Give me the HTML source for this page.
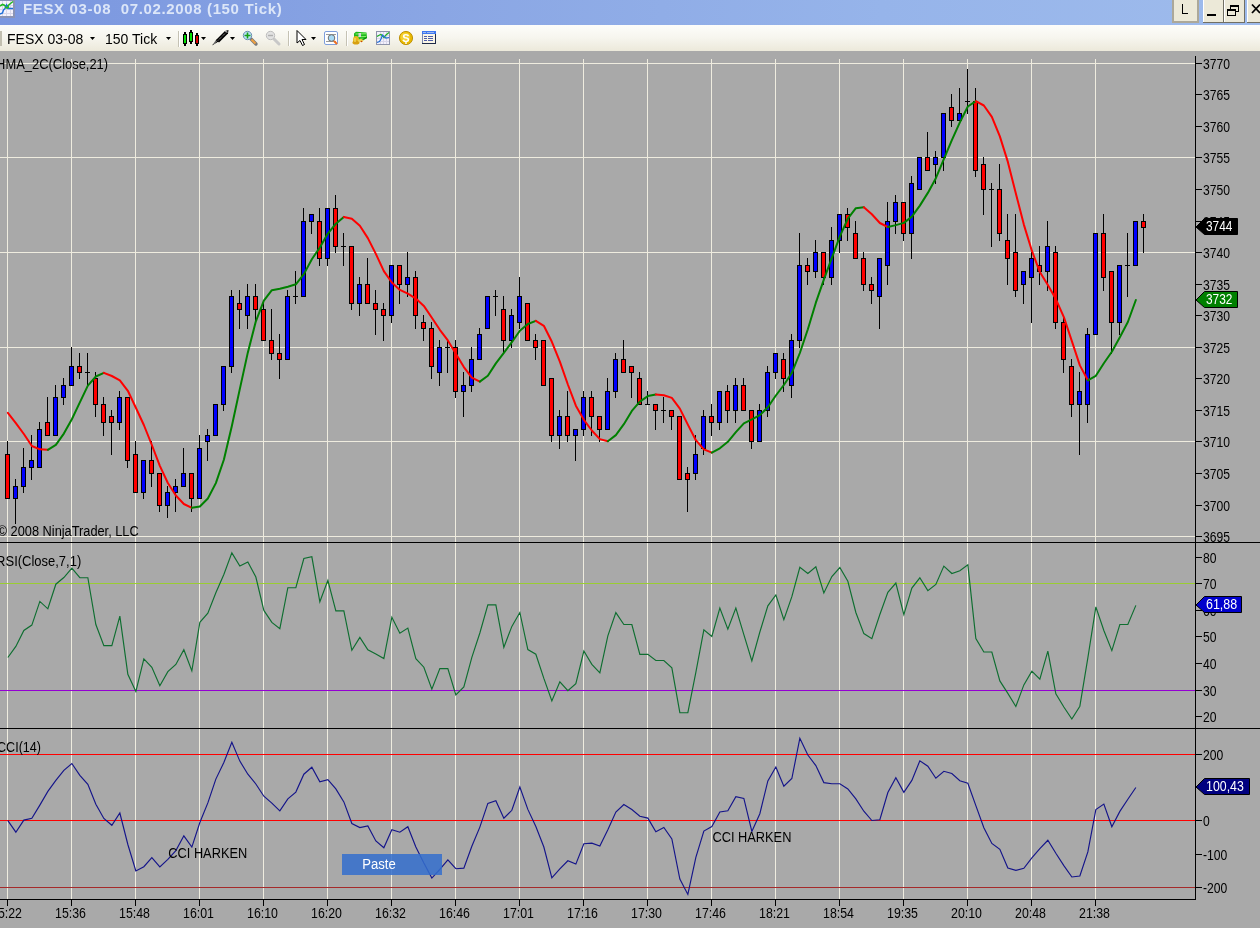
<!DOCTYPE html>
<html><head><meta charset="utf-8">
<style>
html,body{margin:0;padding:0;}
body{width:1260px;height:928px;overflow:hidden;position:relative;background:#A9A9A9;font-family:"Liberation Sans",sans-serif;}
#title{will-change:transform;position:absolute;left:0;top:0;width:1260px;height:25px;background:linear-gradient(to right,#7A96DF 0%,#8AA6E4 35%,#96B4EA 70%,#9EBBEC 100%);}
#title .t{position:absolute;left:23px;top:0px;font-size:15px;font-weight:bold;color:#DCE6F8;white-space:nowrap;letter-spacing:0.64px;}
#tb{will-change:transform;position:absolute;left:0;top:25px;width:1260px;height:26px;background:linear-gradient(to bottom,#FDFDFA 0%,#F6F5EE 50%,#ECE9DA 100%);}
.tt{position:absolute;font-size:14px;color:#000;white-space:nowrap;top:6px;}
.lbl{font-family:"Liberation Sans",sans-serif;font-size:14px;fill:#000;}
</style></head><body>
<div id="title"><div class="t">FESX 03-08&nbsp; 07.02.2008 (150 Tick)</div></div>
<div id="tb">
<div class="tt" style="left:7px">FESX 03-08</div>
<div class="tt" style="left:105px">150 Tick</div>
</div>

<svg width="1260" height="51" style="position:absolute;left:0;top:0;will-change:transform">
<!-- title icon -->
<g shape-rendering="crispEdges">
<rect x="0" y="0" width="15" height="18" fill="#8A93B5"/>
<rect x="0" y="1" width="13" height="15" fill="#F4F2FC"/>
<rect x="2" y="1" width="1" height="15" fill="#D8D6E8"/>
<rect x="6" y="1" width="1" height="15" fill="#D8D6E8"/>
<rect x="10" y="1" width="1" height="15" fill="#D8D6E8"/>
<rect x="0" y="5" width="13" height="1" fill="#D8D6E8"/>
<rect x="0" y="9" width="13" height="1" fill="#D8D6E8"/>
<rect x="0" y="13" width="13" height="1" fill="#D8D6E8"/>
</g>
<polyline points="0,6 2.5,4.5 4,5 6,6.5 8,5.5 10.5,3.5 13,1.5" fill="none" stroke="#22B822" stroke-width="1.6"/>
<polyline points="0,14 2.5,13 3.5,10 5,8.5 6.5,5 8,8.5 10,8.5 13,8.5" fill="none" stroke="#1E6FD8" stroke-width="1.4"/>
<polyline points="5,7 7,8 9,6.5" fill="none" stroke="#22B822" stroke-width="1.6"/>
<!-- window buttons -->
<g shape-rendering="crispEdges">
<rect x="1172" y="0" width="27" height="23" fill="#ACA899"/>
<rect x="1174" y="0" width="23" height="21" fill="#ECE9D8"/>
<rect x="1182" y="4" width="1" height="10" fill="#000"/>
<rect x="1182" y="13" width="6" height="1" fill="#000"/>

<rect x="1203" y="0" width="21" height="23" fill="#716F64"/>
<rect x="1203" y="0" width="1" height="22" fill="#FFF"/>
<rect x="1204" y="0" width="19" height="22" fill="#ECE9D8"/>
<rect x="1207" y="14" width="9" height="2" fill="#000"/>

<rect x="1224" y="0" width="21" height="23" fill="#716F64"/>
<rect x="1224" y="0" width="1" height="22" fill="#FFF"/>
<rect x="1225" y="0" width="19" height="22" fill="#ECE9D8"/>
<rect x="1230" y="5" width="9" height="7" fill="#000"/>
<rect x="1231" y="7" width="7" height="4" fill="#ECE9D8"/>
<rect x="1227" y="9" width="9" height="7" fill="#000"/>
<rect x="1228" y="11" width="7" height="4" fill="#ECE9D8"/>

<rect x="1247" y="0" width="13" height="23" fill="#716F64"/>
<rect x="1247" y="0" width="1" height="22" fill="#FFF"/>
<rect x="1248" y="0" width="12" height="22" fill="#ECE9D8"/>
</g>
<path d="M1252,4.5 L1260,13 M1260,4.5 L1252,13" stroke="#000" stroke-width="1.8"/>
<!-- toolbar -->
<g shape-rendering="crispEdges">
<rect x="0" y="31" width="2" height="15" fill="#C2BFB0"/>
<rect x="178" y="31" width="1" height="16" fill="#C5C2B4"/>
<rect x="179" y="31" width="1" height="16" fill="#FFFFFF"/>
<rect x="288" y="31" width="1" height="15" fill="#C5C2B4"/>
<rect x="289" y="31" width="1" height="15" fill="#FFFFFF"/>
<rect x="346" y="31" width="1" height="15" fill="#C5C2B4"/>
<rect x="347" y="31" width="1" height="15" fill="#FFFFFF"/>
</g>
<g fill="#000">
<polygon points="90,37 95,37 92.5,40"/>
<polygon points="166,37 171,37 168.5,40"/>
<polygon points="201,37 206,37 203.5,40"/>
<polygon points="230,37 235,37 232.5,40"/>
<polygon points="311,37 316,37 313.5,40"/>
</g>
<!-- candle icon -->
<g shape-rendering="crispEdges">
<rect x="184" y="32" width="2" height="14" fill="#000"/>
<rect x="183" y="34" width="4" height="10" fill="#000"/>
<rect x="184" y="35" width="2" height="8" fill="#00E000"/>
<rect x="190" y="30" width="2" height="14" fill="#000"/>
<rect x="189" y="32" width="4" height="10" fill="#000"/>
<rect x="190" y="33" width="2" height="8" fill="#00E000"/>
<rect x="196" y="33" width="2" height="13" fill="#000"/>
<rect x="195" y="35" width="4" height="9" fill="#000"/>
<rect x="196" y="36" width="2" height="7" fill="#E00000"/>
</g>
<!-- pen -->
<polygon points="212,45.5 216.5,39.5 218.5,41.5" fill="#000"/>
<path d="M213.5,44 L217,40.5" stroke="#E8E8E8" stroke-width="0.8"/>
<polygon points="216,40 225,31 228.5,30 228,33.5 219,42.5" fill="#000"/>
<path d="M218,40.5 L226,32.5" stroke="#C8C8C8" stroke-width="0.8" stroke-dasharray="1.2,0.8"/>
<path d="M225,31.5 L227,31.5 L227,33" stroke="#A8A8A8" stroke-width="0.9" fill="none"/>
<!-- zoom + -->
<path d="M251,39 L256,44" stroke="#7A7A7A" stroke-width="3.4" stroke-linecap="round"/>
<path d="M251.5,39.5 L255.5,43.5" stroke="#F0A040" stroke-width="2"/>
<circle cx="247.5" cy="35.5" r="4.2" fill="#BEE3F8" stroke="#6D8FB0" stroke-width="1"/>
<path d="M247.5,32.5 V38.5 M244.5,35.5 H250.5" stroke="#18A018" stroke-width="1.6"/>
<!-- zoom - -->
<path d="M274,39 L279,44" stroke="#C8C8C8" stroke-width="3" stroke-linecap="round"/>
<circle cx="270.5" cy="35.5" r="4.2" fill="#E2E2E2" stroke="#BDBDBD" stroke-width="1"/>
<path d="M268,35.5 H273" stroke="#B0B0B0" stroke-width="1.4"/>
<!-- cursor -->
<path d="M297,30.5 L297,43 L300,40.5 L302.5,45.5 L304.5,44.5 L302,39.5 L306,39.5 Z" fill="#FFF" stroke="#000" stroke-width="1"/>
<!-- page magnifier -->
<rect x="324.5" y="31.5" width="13" height="13" rx="1.5" fill="#FFF" stroke="#7E9EDC" stroke-width="1"/>
<path d="M326,34.5 H336 M326,41.5 H336" stroke="#9A9A9A" stroke-width="1"/>
<circle cx="331.5" cy="38" r="3.3" fill="#A8DAF5" stroke="#707070" stroke-width="1"/>
<path d="M334,41 L337,44" stroke="#F07020" stroke-width="2"/>
<!-- money -->
<path d="M354,33.5 L356,31.8 L366.5,32.5 L367,38 L363,40.5 L358,40 L354,37 Z" fill="#1DB81D"/>
<path d="M355.5,34 L366,33.8 M358,36.8 L366,36.5 M360,39.2 L365,38.8" stroke="#8AF06A" stroke-width="1.1"/>
<path d="M362,39.8 L366.8,37.5" stroke="#078A0A" stroke-width="1.2"/>
<rect x="358.5" y="33" width="2.5" height="4" fill="#E8D0F0" opacity="0.9"/>
<ellipse cx="356" cy="40" rx="3" ry="4" fill="#E6B820"/>
<ellipse cx="356" cy="42.5" rx="3.5" ry="2" fill="#D8A010"/>
<ellipse cx="360.5" cy="40.5" rx="2.8" ry="1.6" fill="#EDD050"/>
<circle cx="361.5" cy="41.5" r="0.8" fill="#C04010"/>
<path d="M355,38 V42" stroke="#F8E878" stroke-width="1"/>
<!-- chart icon -->
<g shape-rendering="crispEdges">
<rect x="376" y="31" width="14" height="14" fill="#8E93AA"/>
<rect x="377" y="32" width="12" height="12" fill="#F2F0FC"/>
<rect x="380" y="32" width="1" height="12" fill="#D8D6EA"/>
<rect x="383" y="32" width="1" height="12" fill="#D8D6EA"/>
<rect x="386" y="32" width="1" height="12" fill="#D8D6EA"/>
<rect x="377" y="35" width="12" height="1" fill="#D8D6EA"/>
<rect x="377" y="38" width="12" height="1" fill="#D8D6EA"/>
<rect x="377" y="41" width="12" height="1" fill="#D8D6EA"/>
</g>
<polyline points="377,36.5 379.5,35 381,34.5 382.5,36 384,37.5 386,35 389,32.5" fill="none" stroke="#20B020" stroke-width="1.2"/>
<polyline points="377,42.5 379.5,41.5 381,39 382.5,35 384,36.5 386,38 389,37.5" fill="none" stroke="#2070D8" stroke-width="1.2"/>
<!-- dollar coin -->
<circle cx="406" cy="38" r="6.6" fill="#E8B800" stroke="#B88A00" stroke-width="0.9"/>
<circle cx="405.3" cy="37.2" r="4.8" fill="#F4D030"/>
<text x="406" y="42" text-anchor="middle" style="font-family:'Liberation Sans',sans-serif;font-weight:bold;font-size:11px" fill="#FFF">S</text>
<path d="M406,42 V44" stroke="#FFF" stroke-width="1.4"/>
<!-- table icon -->
<g shape-rendering="crispEdges">
<rect x="422" y="31" width="14" height="13" fill="#1E2A48"/>
<rect x="422" y="31" width="14" height="3" fill="#3F78F0"/>
<rect x="422" y="34" width="1" height="9" fill="#7C88B0"/>
<rect x="423" y="34" width="12" height="9" fill="#FBF6E6"/>
<rect x="424" y="36" width="3" height="1" fill="#4E5EA8"/>
<rect x="428" y="36" width="5" height="1" fill="#4E5EA8"/>
<rect x="424" y="38" width="3" height="1" fill="#4E5EA8"/>
<rect x="428" y="38" width="5" height="1" fill="#4E5EA8"/>
<rect x="424" y="40" width="3" height="1" fill="#4E5EA8"/>
<rect x="428" y="40" width="5" height="1" fill="#4E5EA8"/>
<rect x="423" y="32" width="3" height="1" fill="#9CB8F0"/>
<rect x="427" y="32" width="7" height="1" fill="#9CB8F0"/>
</g>
</svg>

<svg width="1260" height="928" style="position:absolute;left:0;top:0;will-change:transform">
<g shape-rendering="crispEdges" fill="#EFECDF">
<rect x="7" y="59" width="1" height="840"/>
<rect x="71" y="59" width="1" height="840"/>
<rect x="135" y="59" width="1" height="840"/>
<rect x="199" y="59" width="1" height="840"/>
<rect x="263" y="59" width="1" height="840"/>
<rect x="327" y="59" width="1" height="840"/>
<rect x="391" y="59" width="1" height="840"/>
<rect x="455" y="59" width="1" height="840"/>
<rect x="519" y="59" width="1" height="840"/>
<rect x="583" y="59" width="1" height="840"/>
<rect x="647" y="59" width="1" height="840"/>
<rect x="711" y="59" width="1" height="840"/>
<rect x="775" y="59" width="1" height="840"/>
<rect x="839" y="59" width="1" height="840"/>
<rect x="903" y="59" width="1" height="840"/>
<rect x="967" y="59" width="1" height="840"/>
<rect x="1031" y="59" width="1" height="840"/>
<rect x="1095" y="59" width="1" height="840"/>
<rect x="0" y="63" width="1195" height="1"/>
<rect x="0" y="157" width="1195" height="1"/>
<rect x="0" y="252" width="1195" height="1"/>
<rect x="0" y="347" width="1195" height="1"/>
<rect x="0" y="441" width="1195" height="1"/>
<rect x="0" y="536" width="1195" height="1"/>
</g>
<g shape-rendering="crispEdges" fill="#000">
<rect x="1195" y="56" width="1" height="844"/>
<rect x="0" y="542" width="1260" height="1"/>
<rect x="0" y="728" width="1260" height="1"/>
<rect x="0" y="899" width="1196" height="1"/>
<rect x="1196" y="536" width="6" height="1"/>
<rect x="1196" y="505" width="6" height="1"/>
<rect x="1196" y="473" width="6" height="1"/>
<rect x="1196" y="441" width="6" height="1"/>
<rect x="1196" y="410" width="6" height="1"/>
<rect x="1196" y="378" width="6" height="1"/>
<rect x="1196" y="347" width="6" height="1"/>
<rect x="1196" y="315" width="6" height="1"/>
<rect x="1196" y="284" width="6" height="1"/>
<rect x="1196" y="252" width="6" height="1"/>
<rect x="1196" y="221" width="6" height="1"/>
<rect x="1196" y="189" width="6" height="1"/>
<rect x="1196" y="157" width="6" height="1"/>
<rect x="1196" y="126" width="6" height="1"/>
<rect x="1196" y="94" width="6" height="1"/>
<rect x="1196" y="63" width="6" height="1"/>
<rect x="1196" y="716" width="6" height="1"/>
<rect x="1196" y="690" width="6" height="1"/>
<rect x="1196" y="663" width="6" height="1"/>
<rect x="1196" y="636" width="6" height="1"/>
<rect x="1196" y="610" width="6" height="1"/>
<rect x="1196" y="583" width="6" height="1"/>
<rect x="1196" y="557" width="6" height="1"/>
<rect x="1196" y="754" width="6" height="1"/>
<rect x="1196" y="787" width="6" height="1"/>
<rect x="1196" y="820" width="6" height="1"/>
<rect x="1196" y="854" width="6" height="1"/>
<rect x="1196" y="887" width="6" height="1"/>
<rect x="7" y="900" width="1" height="6"/>
<rect x="71" y="900" width="1" height="6"/>
<rect x="135" y="900" width="1" height="6"/>
<rect x="199" y="900" width="1" height="6"/>
<rect x="263" y="900" width="1" height="6"/>
<rect x="327" y="900" width="1" height="6"/>
<rect x="391" y="900" width="1" height="6"/>
<rect x="455" y="900" width="1" height="6"/>
<rect x="519" y="900" width="1" height="6"/>
<rect x="583" y="900" width="1" height="6"/>
<rect x="647" y="900" width="1" height="6"/>
<rect x="711" y="900" width="1" height="6"/>
<rect x="775" y="900" width="1" height="6"/>
<rect x="839" y="900" width="1" height="6"/>
<rect x="903" y="900" width="1" height="6"/>
<rect x="967" y="900" width="1" height="6"/>
<rect x="1031" y="900" width="1" height="6"/>
<rect x="1095" y="900" width="1" height="6"/>
</g>
<g shape-rendering="crispEdges">
<rect x="0" y="583" width="1195" height="1" fill="#9ACD32"/>
<rect x="0" y="690" width="1195" height="1" fill="#9400D3"/>
<rect x="0" y="754" width="1195" height="1" fill="#FF0000"/>
<rect x="0" y="820" width="1195" height="1" fill="#FF0000"/>
<rect x="0" y="887" width="1195" height="1" fill="#A52A2A"/>
</g>
<g shape-rendering="crispEdges">
<rect x="7" y="441" width="1" height="58" fill="#000"/>
<rect x="5" y="454" width="5" height="45" fill="#000"/>
<rect x="6" y="455" width="3" height="43" fill="#FF0000"/>
<rect x="15" y="479" width="1" height="45" fill="#000"/>
<rect x="13" y="486" width="5" height="13" fill="#000"/>
<rect x="14" y="487" width="3" height="11" fill="#0000FF"/>
<rect x="23" y="448" width="1" height="45" fill="#000"/>
<rect x="21" y="467" width="5" height="20" fill="#000"/>
<rect x="22" y="468" width="3" height="18" fill="#0000FF"/>
<rect x="31" y="435" width="1" height="45" fill="#000"/>
<rect x="29" y="460" width="5" height="8" fill="#000"/>
<rect x="30" y="461" width="3" height="6" fill="#0000FF"/>
<rect x="39" y="422" width="1" height="46" fill="#000"/>
<rect x="37" y="429" width="5" height="39" fill="#000"/>
<rect x="38" y="430" width="3" height="37" fill="#0000FF"/>
<rect x="47" y="397" width="1" height="39" fill="#000"/>
<rect x="45" y="422" width="5" height="14" fill="#000"/>
<rect x="46" y="423" width="3" height="12" fill="#FF0000"/>
<rect x="55" y="385" width="1" height="51" fill="#000"/>
<rect x="53" y="397" width="5" height="39" fill="#000"/>
<rect x="54" y="398" width="3" height="37" fill="#0000FF"/>
<rect x="63" y="378" width="1" height="27" fill="#000"/>
<rect x="61" y="385" width="5" height="13" fill="#000"/>
<rect x="62" y="386" width="3" height="11" fill="#0000FF"/>
<rect x="71" y="347" width="1" height="39" fill="#000"/>
<rect x="69" y="366" width="5" height="20" fill="#000"/>
<rect x="70" y="367" width="3" height="18" fill="#0000FF"/>
<rect x="79" y="353" width="1" height="26" fill="#000"/>
<rect x="77" y="366" width="5" height="7" fill="#000"/>
<rect x="78" y="367" width="3" height="5" fill="#FF0000"/>
<rect x="87" y="353" width="1" height="33" fill="#000"/>
<rect x="85" y="372" width="5" height="1" fill="#000"/>
<rect x="95" y="372" width="1" height="45" fill="#000"/>
<rect x="93" y="378" width="5" height="27" fill="#000"/>
<rect x="94" y="379" width="3" height="25" fill="#FF0000"/>
<rect x="103" y="397" width="1" height="39" fill="#000"/>
<rect x="101" y="404" width="5" height="19" fill="#000"/>
<rect x="102" y="405" width="3" height="17" fill="#FF0000"/>
<rect x="111" y="410" width="1" height="45" fill="#000"/>
<rect x="109" y="416" width="5" height="7" fill="#000"/>
<rect x="110" y="417" width="3" height="5" fill="#FF0000"/>
<rect x="119" y="391" width="1" height="39" fill="#000"/>
<rect x="117" y="397" width="5" height="26" fill="#000"/>
<rect x="118" y="398" width="3" height="24" fill="#0000FF"/>
<rect x="127" y="397" width="1" height="71" fill="#000"/>
<rect x="125" y="397" width="5" height="64" fill="#000"/>
<rect x="126" y="398" width="3" height="62" fill="#FF0000"/>
<rect x="135" y="441" width="1" height="52" fill="#000"/>
<rect x="133" y="454" width="5" height="39" fill="#000"/>
<rect x="134" y="455" width="3" height="37" fill="#FF0000"/>
<rect x="143" y="460" width="1" height="39" fill="#000"/>
<rect x="141" y="460" width="5" height="33" fill="#000"/>
<rect x="142" y="461" width="3" height="31" fill="#0000FF"/>
<rect x="151" y="441" width="1" height="46" fill="#000"/>
<rect x="149" y="460" width="5" height="14" fill="#000"/>
<rect x="150" y="461" width="3" height="12" fill="#FF0000"/>
<rect x="159" y="473" width="1" height="39" fill="#000"/>
<rect x="157" y="473" width="5" height="33" fill="#000"/>
<rect x="158" y="474" width="3" height="31" fill="#FF0000"/>
<rect x="167" y="486" width="1" height="32" fill="#000"/>
<rect x="165" y="492" width="5" height="14" fill="#000"/>
<rect x="166" y="493" width="3" height="12" fill="#0000FF"/>
<rect x="175" y="479" width="1" height="33" fill="#000"/>
<rect x="173" y="486" width="5" height="7" fill="#000"/>
<rect x="174" y="487" width="3" height="5" fill="#0000FF"/>
<rect x="183" y="448" width="1" height="39" fill="#000"/>
<rect x="181" y="473" width="5" height="14" fill="#000"/>
<rect x="182" y="474" width="3" height="12" fill="#0000FF"/>
<rect x="191" y="473" width="1" height="39" fill="#000"/>
<rect x="189" y="473" width="5" height="26" fill="#000"/>
<rect x="190" y="474" width="3" height="24" fill="#FF0000"/>
<rect x="199" y="435" width="1" height="64" fill="#000"/>
<rect x="197" y="448" width="5" height="51" fill="#000"/>
<rect x="198" y="449" width="3" height="49" fill="#0000FF"/>
<rect x="207" y="429" width="1" height="32" fill="#000"/>
<rect x="205" y="435" width="5" height="7" fill="#000"/>
<rect x="206" y="436" width="3" height="5" fill="#0000FF"/>
<rect x="215" y="404" width="1" height="32" fill="#000"/>
<rect x="213" y="404" width="5" height="32" fill="#000"/>
<rect x="214" y="405" width="3" height="30" fill="#0000FF"/>
<rect x="223" y="366" width="1" height="45" fill="#000"/>
<rect x="221" y="366" width="5" height="39" fill="#000"/>
<rect x="222" y="367" width="3" height="37" fill="#0000FF"/>
<rect x="231" y="290" width="1" height="83" fill="#000"/>
<rect x="229" y="296" width="5" height="71" fill="#000"/>
<rect x="230" y="297" width="3" height="69" fill="#0000FF"/>
<rect x="239" y="290" width="1" height="39" fill="#000"/>
<rect x="237" y="303" width="5" height="7" fill="#000"/>
<rect x="238" y="304" width="3" height="5" fill="#FF0000"/>
<rect x="247" y="284" width="1" height="45" fill="#000"/>
<rect x="245" y="296" width="5" height="20" fill="#000"/>
<rect x="246" y="297" width="3" height="18" fill="#0000FF"/>
<rect x="255" y="284" width="1" height="39" fill="#000"/>
<rect x="253" y="296" width="5" height="14" fill="#000"/>
<rect x="254" y="297" width="3" height="12" fill="#FF0000"/>
<rect x="263" y="303" width="1" height="38" fill="#000"/>
<rect x="261" y="309" width="5" height="32" fill="#000"/>
<rect x="262" y="310" width="3" height="30" fill="#FF0000"/>
<rect x="271" y="309" width="1" height="51" fill="#000"/>
<rect x="269" y="340" width="5" height="14" fill="#000"/>
<rect x="270" y="341" width="3" height="12" fill="#FF0000"/>
<rect x="279" y="334" width="1" height="45" fill="#000"/>
<rect x="277" y="353" width="5" height="7" fill="#000"/>
<rect x="278" y="354" width="3" height="5" fill="#FF0000"/>
<rect x="287" y="290" width="1" height="70" fill="#000"/>
<rect x="285" y="296" width="5" height="64" fill="#000"/>
<rect x="286" y="297" width="3" height="62" fill="#0000FF"/>
<rect x="295" y="271" width="1" height="33" fill="#000"/>
<rect x="293" y="296" width="5" height="1" fill="#000"/>
<rect x="303" y="208" width="1" height="89" fill="#000"/>
<rect x="301" y="221" width="5" height="76" fill="#000"/>
<rect x="302" y="222" width="3" height="74" fill="#0000FF"/>
<rect x="311" y="214" width="1" height="20" fill="#000"/>
<rect x="309" y="214" width="5" height="8" fill="#000"/>
<rect x="310" y="215" width="3" height="6" fill="#0000FF"/>
<rect x="319" y="208" width="1" height="58" fill="#000"/>
<rect x="317" y="221" width="5" height="38" fill="#000"/>
<rect x="318" y="222" width="3" height="36" fill="#FF0000"/>
<rect x="327" y="208" width="1" height="58" fill="#000"/>
<rect x="325" y="208" width="5" height="51" fill="#000"/>
<rect x="326" y="209" width="3" height="49" fill="#0000FF"/>
<rect x="335" y="195" width="1" height="58" fill="#000"/>
<rect x="333" y="208" width="5" height="39" fill="#000"/>
<rect x="334" y="209" width="3" height="37" fill="#FF0000"/>
<rect x="343" y="233" width="1" height="33" fill="#000"/>
<rect x="341" y="246" width="5" height="1" fill="#000"/>
<rect x="351" y="246" width="1" height="64" fill="#000"/>
<rect x="349" y="246" width="5" height="58" fill="#000"/>
<rect x="350" y="247" width="3" height="56" fill="#FF0000"/>
<rect x="359" y="277" width="1" height="39" fill="#000"/>
<rect x="357" y="284" width="5" height="20" fill="#000"/>
<rect x="358" y="285" width="3" height="18" fill="#0000FF"/>
<rect x="367" y="258" width="1" height="46" fill="#000"/>
<rect x="365" y="284" width="5" height="20" fill="#000"/>
<rect x="366" y="285" width="3" height="18" fill="#FF0000"/>
<rect x="375" y="290" width="1" height="45" fill="#000"/>
<rect x="373" y="303" width="5" height="7" fill="#000"/>
<rect x="374" y="304" width="3" height="5" fill="#FF0000"/>
<rect x="383" y="303" width="1" height="38" fill="#000"/>
<rect x="381" y="309" width="5" height="7" fill="#000"/>
<rect x="382" y="310" width="3" height="5" fill="#FF0000"/>
<rect x="391" y="265" width="1" height="58" fill="#000"/>
<rect x="389" y="265" width="5" height="51" fill="#000"/>
<rect x="390" y="266" width="3" height="49" fill="#0000FF"/>
<rect x="399" y="265" width="1" height="39" fill="#000"/>
<rect x="397" y="265" width="5" height="20" fill="#000"/>
<rect x="398" y="266" width="3" height="18" fill="#FF0000"/>
<rect x="407" y="252" width="1" height="45" fill="#000"/>
<rect x="405" y="277" width="5" height="8" fill="#000"/>
<rect x="406" y="278" width="3" height="6" fill="#0000FF"/>
<rect x="415" y="271" width="1" height="58" fill="#000"/>
<rect x="413" y="277" width="5" height="39" fill="#000"/>
<rect x="414" y="278" width="3" height="37" fill="#FF0000"/>
<rect x="423" y="315" width="1" height="26" fill="#000"/>
<rect x="421" y="322" width="5" height="7" fill="#000"/>
<rect x="422" y="323" width="3" height="5" fill="#FF0000"/>
<rect x="431" y="322" width="1" height="57" fill="#000"/>
<rect x="429" y="328" width="5" height="39" fill="#000"/>
<rect x="430" y="329" width="3" height="37" fill="#FF0000"/>
<rect x="439" y="340" width="1" height="46" fill="#000"/>
<rect x="437" y="347" width="5" height="26" fill="#000"/>
<rect x="438" y="348" width="3" height="24" fill="#0000FF"/>
<rect x="447" y="340" width="1" height="33" fill="#000"/>
<rect x="445" y="347" width="5" height="1" fill="#000"/>
<rect x="455" y="340" width="1" height="58" fill="#000"/>
<rect x="453" y="347" width="5" height="45" fill="#000"/>
<rect x="454" y="348" width="3" height="43" fill="#FF0000"/>
<rect x="463" y="372" width="1" height="45" fill="#000"/>
<rect x="461" y="385" width="5" height="7" fill="#000"/>
<rect x="462" y="386" width="3" height="5" fill="#0000FF"/>
<rect x="471" y="347" width="1" height="45" fill="#000"/>
<rect x="469" y="359" width="5" height="27" fill="#000"/>
<rect x="470" y="360" width="3" height="25" fill="#0000FF"/>
<rect x="479" y="328" width="1" height="32" fill="#000"/>
<rect x="477" y="334" width="5" height="26" fill="#000"/>
<rect x="478" y="335" width="3" height="24" fill="#0000FF"/>
<rect x="487" y="296" width="1" height="33" fill="#000"/>
<rect x="485" y="296" width="5" height="33" fill="#000"/>
<rect x="486" y="297" width="3" height="31" fill="#0000FF"/>
<rect x="495" y="290" width="1" height="26" fill="#000"/>
<rect x="493" y="296" width="5" height="1" fill="#000"/>
<rect x="503" y="296" width="1" height="58" fill="#000"/>
<rect x="501" y="309" width="5" height="32" fill="#000"/>
<rect x="502" y="310" width="3" height="30" fill="#FF0000"/>
<rect x="511" y="309" width="1" height="39" fill="#000"/>
<rect x="509" y="315" width="5" height="26" fill="#000"/>
<rect x="510" y="316" width="3" height="24" fill="#0000FF"/>
<rect x="519" y="277" width="1" height="52" fill="#000"/>
<rect x="517" y="296" width="5" height="27" fill="#000"/>
<rect x="518" y="297" width="3" height="25" fill="#0000FF"/>
<rect x="527" y="303" width="1" height="38" fill="#000"/>
<rect x="525" y="303" width="5" height="38" fill="#000"/>
<rect x="526" y="304" width="3" height="36" fill="#FF0000"/>
<rect x="535" y="334" width="1" height="26" fill="#000"/>
<rect x="533" y="340" width="5" height="8" fill="#000"/>
<rect x="534" y="341" width="3" height="6" fill="#FF0000"/>
<rect x="543" y="340" width="1" height="46" fill="#000"/>
<rect x="541" y="340" width="5" height="46" fill="#000"/>
<rect x="542" y="341" width="3" height="44" fill="#FF0000"/>
<rect x="551" y="378" width="1" height="64" fill="#000"/>
<rect x="549" y="378" width="5" height="58" fill="#000"/>
<rect x="550" y="379" width="3" height="56" fill="#FF0000"/>
<rect x="559" y="410" width="1" height="39" fill="#000"/>
<rect x="557" y="416" width="5" height="20" fill="#000"/>
<rect x="558" y="417" width="3" height="18" fill="#0000FF"/>
<rect x="567" y="391" width="1" height="51" fill="#000"/>
<rect x="565" y="416" width="5" height="20" fill="#000"/>
<rect x="566" y="417" width="3" height="18" fill="#FF0000"/>
<rect x="575" y="429" width="1" height="32" fill="#000"/>
<rect x="573" y="429" width="5" height="7" fill="#000"/>
<rect x="574" y="430" width="3" height="5" fill="#0000FF"/>
<rect x="583" y="391" width="1" height="45" fill="#000"/>
<rect x="581" y="397" width="5" height="33" fill="#000"/>
<rect x="582" y="398" width="3" height="31" fill="#0000FF"/>
<rect x="591" y="391" width="1" height="45" fill="#000"/>
<rect x="589" y="397" width="5" height="20" fill="#000"/>
<rect x="590" y="398" width="3" height="18" fill="#FF0000"/>
<rect x="599" y="416" width="1" height="26" fill="#000"/>
<rect x="597" y="416" width="5" height="14" fill="#000"/>
<rect x="598" y="417" width="3" height="12" fill="#FF0000"/>
<rect x="607" y="378" width="1" height="52" fill="#000"/>
<rect x="605" y="391" width="5" height="39" fill="#000"/>
<rect x="606" y="392" width="3" height="37" fill="#0000FF"/>
<rect x="615" y="353" width="1" height="45" fill="#000"/>
<rect x="613" y="359" width="5" height="33" fill="#000"/>
<rect x="614" y="360" width="3" height="31" fill="#0000FF"/>
<rect x="623" y="340" width="1" height="33" fill="#000"/>
<rect x="621" y="359" width="5" height="14" fill="#000"/>
<rect x="622" y="360" width="3" height="12" fill="#FF0000"/>
<rect x="631" y="366" width="1" height="32" fill="#000"/>
<rect x="629" y="366" width="5" height="7" fill="#000"/>
<rect x="630" y="367" width="3" height="5" fill="#FF0000"/>
<rect x="639" y="372" width="1" height="33" fill="#000"/>
<rect x="637" y="378" width="5" height="27" fill="#000"/>
<rect x="638" y="379" width="3" height="25" fill="#FF0000"/>
<rect x="647" y="391" width="1" height="14" fill="#000"/>
<rect x="645" y="404" width="5" height="1" fill="#000"/>
<rect x="655" y="404" width="1" height="26" fill="#000"/>
<rect x="653" y="404" width="5" height="7" fill="#000"/>
<rect x="654" y="405" width="3" height="5" fill="#FF0000"/>
<rect x="663" y="397" width="1" height="26" fill="#000"/>
<rect x="661" y="410" width="5" height="1" fill="#000"/>
<rect x="671" y="410" width="1" height="20" fill="#000"/>
<rect x="669" y="410" width="5" height="7" fill="#000"/>
<rect x="670" y="411" width="3" height="5" fill="#FF0000"/>
<rect x="679" y="416" width="1" height="64" fill="#000"/>
<rect x="677" y="416" width="5" height="64" fill="#000"/>
<rect x="678" y="417" width="3" height="62" fill="#FF0000"/>
<rect x="687" y="467" width="1" height="45" fill="#000"/>
<rect x="685" y="473" width="5" height="7" fill="#000"/>
<rect x="686" y="474" width="3" height="5" fill="#FF0000"/>
<rect x="695" y="435" width="1" height="45" fill="#000"/>
<rect x="693" y="454" width="5" height="20" fill="#000"/>
<rect x="694" y="455" width="3" height="18" fill="#0000FF"/>
<rect x="703" y="410" width="1" height="45" fill="#000"/>
<rect x="701" y="416" width="5" height="33" fill="#000"/>
<rect x="702" y="417" width="3" height="31" fill="#0000FF"/>
<rect x="711" y="404" width="1" height="32" fill="#000"/>
<rect x="709" y="416" width="5" height="7" fill="#000"/>
<rect x="710" y="417" width="3" height="5" fill="#FF0000"/>
<rect x="719" y="391" width="1" height="39" fill="#000"/>
<rect x="717" y="391" width="5" height="32" fill="#000"/>
<rect x="718" y="392" width="3" height="30" fill="#0000FF"/>
<rect x="727" y="385" width="1" height="38" fill="#000"/>
<rect x="725" y="391" width="5" height="20" fill="#000"/>
<rect x="726" y="392" width="3" height="18" fill="#FF0000"/>
<rect x="735" y="378" width="1" height="45" fill="#000"/>
<rect x="733" y="385" width="5" height="26" fill="#000"/>
<rect x="734" y="386" width="3" height="24" fill="#0000FF"/>
<rect x="743" y="378" width="1" height="33" fill="#000"/>
<rect x="741" y="385" width="5" height="26" fill="#000"/>
<rect x="742" y="386" width="3" height="24" fill="#FF0000"/>
<rect x="751" y="410" width="1" height="39" fill="#000"/>
<rect x="749" y="410" width="5" height="32" fill="#000"/>
<rect x="750" y="411" width="3" height="30" fill="#FF0000"/>
<rect x="759" y="404" width="1" height="38" fill="#000"/>
<rect x="757" y="410" width="5" height="32" fill="#000"/>
<rect x="758" y="411" width="3" height="30" fill="#0000FF"/>
<rect x="767" y="366" width="1" height="51" fill="#000"/>
<rect x="765" y="372" width="5" height="39" fill="#000"/>
<rect x="766" y="373" width="3" height="37" fill="#0000FF"/>
<rect x="775" y="353" width="1" height="26" fill="#000"/>
<rect x="773" y="353" width="5" height="20" fill="#000"/>
<rect x="774" y="354" width="3" height="18" fill="#0000FF"/>
<rect x="783" y="353" width="1" height="39" fill="#000"/>
<rect x="781" y="359" width="5" height="20" fill="#000"/>
<rect x="782" y="360" width="3" height="18" fill="#FF0000"/>
<rect x="791" y="334" width="1" height="64" fill="#000"/>
<rect x="789" y="340" width="5" height="46" fill="#000"/>
<rect x="790" y="341" width="3" height="44" fill="#0000FF"/>
<rect x="799" y="233" width="1" height="115" fill="#000"/>
<rect x="797" y="265" width="5" height="76" fill="#000"/>
<rect x="798" y="266" width="3" height="74" fill="#0000FF"/>
<rect x="807" y="258" width="1" height="27" fill="#000"/>
<rect x="805" y="265" width="5" height="7" fill="#000"/>
<rect x="806" y="266" width="3" height="5" fill="#FF0000"/>
<rect x="815" y="240" width="1" height="38" fill="#000"/>
<rect x="813" y="252" width="5" height="20" fill="#000"/>
<rect x="814" y="253" width="3" height="18" fill="#0000FF"/>
<rect x="823" y="252" width="1" height="33" fill="#000"/>
<rect x="821" y="252" width="5" height="26" fill="#000"/>
<rect x="822" y="253" width="3" height="24" fill="#FF0000"/>
<rect x="831" y="227" width="1" height="58" fill="#000"/>
<rect x="829" y="240" width="5" height="38" fill="#000"/>
<rect x="830" y="241" width="3" height="36" fill="#0000FF"/>
<rect x="839" y="214" width="1" height="39" fill="#000"/>
<rect x="837" y="214" width="5" height="27" fill="#000"/>
<rect x="838" y="215" width="3" height="25" fill="#0000FF"/>
<rect x="847" y="208" width="1" height="33" fill="#000"/>
<rect x="845" y="214" width="5" height="14" fill="#000"/>
<rect x="846" y="215" width="3" height="12" fill="#FF0000"/>
<rect x="855" y="221" width="1" height="38" fill="#000"/>
<rect x="853" y="233" width="5" height="26" fill="#000"/>
<rect x="854" y="234" width="3" height="24" fill="#FF0000"/>
<rect x="863" y="252" width="1" height="39" fill="#000"/>
<rect x="861" y="258" width="5" height="27" fill="#000"/>
<rect x="862" y="259" width="3" height="25" fill="#FF0000"/>
<rect x="871" y="277" width="1" height="27" fill="#000"/>
<rect x="869" y="284" width="5" height="7" fill="#000"/>
<rect x="870" y="285" width="3" height="5" fill="#FF0000"/>
<rect x="879" y="258" width="1" height="71" fill="#000"/>
<rect x="877" y="258" width="5" height="39" fill="#000"/>
<rect x="878" y="259" width="3" height="37" fill="#0000FF"/>
<rect x="887" y="202" width="1" height="83" fill="#000"/>
<rect x="885" y="221" width="5" height="45" fill="#000"/>
<rect x="886" y="222" width="3" height="43" fill="#0000FF"/>
<rect x="895" y="195" width="1" height="39" fill="#000"/>
<rect x="893" y="202" width="5" height="20" fill="#000"/>
<rect x="894" y="203" width="3" height="18" fill="#0000FF"/>
<rect x="903" y="202" width="1" height="39" fill="#000"/>
<rect x="901" y="202" width="5" height="32" fill="#000"/>
<rect x="902" y="203" width="3" height="30" fill="#FF0000"/>
<rect x="911" y="176" width="1" height="83" fill="#000"/>
<rect x="909" y="183" width="5" height="51" fill="#000"/>
<rect x="910" y="184" width="3" height="49" fill="#0000FF"/>
<rect x="919" y="157" width="1" height="33" fill="#000"/>
<rect x="917" y="157" width="5" height="33" fill="#000"/>
<rect x="918" y="158" width="3" height="31" fill="#0000FF"/>
<rect x="927" y="132" width="1" height="39" fill="#000"/>
<rect x="925" y="157" width="5" height="14" fill="#000"/>
<rect x="926" y="158" width="3" height="12" fill="#FF0000"/>
<rect x="935" y="151" width="1" height="33" fill="#000"/>
<rect x="933" y="157" width="5" height="8" fill="#000"/>
<rect x="934" y="158" width="3" height="6" fill="#0000FF"/>
<rect x="943" y="113" width="1" height="58" fill="#000"/>
<rect x="941" y="113" width="5" height="45" fill="#000"/>
<rect x="942" y="114" width="3" height="43" fill="#0000FF"/>
<rect x="951" y="94" width="1" height="33" fill="#000"/>
<rect x="949" y="107" width="5" height="14" fill="#000"/>
<rect x="950" y="108" width="3" height="12" fill="#FF0000"/>
<rect x="959" y="88" width="1" height="33" fill="#000"/>
<rect x="957" y="113" width="5" height="8" fill="#000"/>
<rect x="958" y="114" width="3" height="6" fill="#0000FF"/>
<rect x="967" y="69" width="1" height="45" fill="#000"/>
<rect x="965" y="101" width="5" height="1" fill="#000"/>
<rect x="975" y="88" width="1" height="89" fill="#000"/>
<rect x="973" y="101" width="5" height="70" fill="#000"/>
<rect x="974" y="102" width="3" height="68" fill="#FF0000"/>
<rect x="983" y="157" width="1" height="58" fill="#000"/>
<rect x="981" y="164" width="5" height="26" fill="#000"/>
<rect x="982" y="165" width="3" height="24" fill="#FF0000"/>
<rect x="991" y="183" width="1" height="64" fill="#000"/>
<rect x="989" y="189" width="5" height="1" fill="#000"/>
<rect x="999" y="164" width="1" height="77" fill="#000"/>
<rect x="997" y="189" width="5" height="45" fill="#000"/>
<rect x="998" y="190" width="3" height="43" fill="#FF0000"/>
<rect x="1007" y="214" width="1" height="71" fill="#000"/>
<rect x="1005" y="240" width="5" height="19" fill="#000"/>
<rect x="1006" y="241" width="3" height="17" fill="#FF0000"/>
<rect x="1015" y="214" width="1" height="83" fill="#000"/>
<rect x="1013" y="252" width="5" height="39" fill="#000"/>
<rect x="1014" y="253" width="3" height="37" fill="#FF0000"/>
<rect x="1023" y="271" width="1" height="33" fill="#000"/>
<rect x="1021" y="271" width="5" height="14" fill="#000"/>
<rect x="1022" y="272" width="3" height="12" fill="#0000FF"/>
<rect x="1031" y="252" width="1" height="71" fill="#000"/>
<rect x="1029" y="258" width="5" height="20" fill="#000"/>
<rect x="1030" y="259" width="3" height="18" fill="#0000FF"/>
<rect x="1039" y="246" width="1" height="39" fill="#000"/>
<rect x="1037" y="265" width="5" height="7" fill="#000"/>
<rect x="1038" y="266" width="3" height="5" fill="#FF0000"/>
<rect x="1047" y="221" width="1" height="70" fill="#000"/>
<rect x="1045" y="246" width="5" height="26" fill="#000"/>
<rect x="1046" y="247" width="3" height="24" fill="#0000FF"/>
<rect x="1055" y="246" width="1" height="83" fill="#000"/>
<rect x="1053" y="252" width="5" height="71" fill="#000"/>
<rect x="1054" y="253" width="3" height="69" fill="#FF0000"/>
<rect x="1063" y="315" width="1" height="58" fill="#000"/>
<rect x="1061" y="322" width="5" height="38" fill="#000"/>
<rect x="1062" y="323" width="3" height="36" fill="#FF0000"/>
<rect x="1071" y="359" width="1" height="58" fill="#000"/>
<rect x="1069" y="366" width="5" height="39" fill="#000"/>
<rect x="1070" y="367" width="3" height="37" fill="#FF0000"/>
<rect x="1079" y="372" width="1" height="83" fill="#000"/>
<rect x="1077" y="391" width="5" height="14" fill="#000"/>
<rect x="1078" y="392" width="3" height="12" fill="#0000FF"/>
<rect x="1087" y="328" width="1" height="95" fill="#000"/>
<rect x="1085" y="334" width="5" height="71" fill="#000"/>
<rect x="1086" y="335" width="3" height="69" fill="#0000FF"/>
<rect x="1095" y="233" width="1" height="102" fill="#000"/>
<rect x="1093" y="233" width="5" height="102" fill="#000"/>
<rect x="1094" y="234" width="3" height="100" fill="#0000FF"/>
<rect x="1103" y="214" width="1" height="77" fill="#000"/>
<rect x="1101" y="233" width="5" height="45" fill="#000"/>
<rect x="1102" y="234" width="3" height="43" fill="#FF0000"/>
<rect x="1111" y="271" width="1" height="83" fill="#000"/>
<rect x="1109" y="271" width="5" height="52" fill="#000"/>
<rect x="1110" y="272" width="3" height="50" fill="#FF0000"/>
<rect x="1119" y="265" width="1" height="70" fill="#000"/>
<rect x="1117" y="265" width="5" height="58" fill="#000"/>
<rect x="1118" y="266" width="3" height="56" fill="#0000FF"/>
<rect x="1127" y="233" width="1" height="64" fill="#000"/>
<rect x="1125" y="265" width="5" height="1" fill="#000"/>
<rect x="1135" y="221" width="1" height="45" fill="#000"/>
<rect x="1133" y="221" width="5" height="45" fill="#000"/>
<rect x="1134" y="222" width="3" height="43" fill="#0000FF"/>
<rect x="1143" y="214" width="1" height="39" fill="#000"/>
<rect x="1141" y="221" width="5" height="7" fill="#000"/>
<rect x="1142" y="222" width="3" height="5" fill="#FF0000"/>
</g>
<g fill="none" stroke-width="2" stroke-linecap="round" stroke-linejoin="round">
<polyline points="7.85,412.9 15.85,423.2 23.85,434.0 31.85,446.0 39.85,449.3 47.85,449.8" stroke="#FF0000"/>
<polyline points="47.85,449.8 55.85,444.8 63.85,433.6 71.85,419.2 79.85,402.4 87.85,385.6 95.85,376.5 103.85,372.9" stroke="#008000"/>
<polyline points="103.85,372.9 111.85,376.0 119.85,380.3 127.85,390.8 135.85,407.7 143.85,425.0 151.85,445.0 159.85,465.8 167.85,483.0 175.85,495.5 183.85,504.0 191.85,507.8" stroke="#FF0000"/>
<polyline points="191.85,507.8 199.85,506.5 207.85,498.5 215.85,483.1 223.85,459.7 231.85,425.9 239.85,388.9 247.85,352.4 255.85,321.3 263.85,300.7 271.85,290.2 279.85,288.8 287.85,286.7 295.85,284.3 303.85,274.1 311.85,259.2 319.85,247.5 327.85,233.6 335.85,223.7 343.85,216.9" stroke="#008000"/>
<polyline points="343.85,216.9 351.85,218.7 359.85,225.8 367.85,238.1 375.85,253.9 383.85,271.1 391.85,282.5 399.85,289.9 407.85,293.7 415.85,298.6 423.85,305.9 431.85,317.7 439.85,329.8 447.85,340.4 455.85,353.7 463.85,367.1 471.85,377.6 479.85,381.6" stroke="#FF0000"/>
<polyline points="479.85,381.6 487.85,375.8 495.85,363.4 503.85,352.9 511.85,342.2 519.85,330.8 527.85,324.0 535.85,320.9" stroke="#008000"/>
<polyline points="535.85,320.9 543.85,325.8 551.85,341.8 559.85,361.7 567.85,384.5 575.85,405.7 583.85,419.8 591.85,430.5 599.85,439.1 607.85,441.2" stroke="#FF0000"/>
<polyline points="607.85,441.2 615.85,435.1 623.85,424.2 631.85,410.9 639.85,401.6 647.85,396.1 655.85,394.4" stroke="#008000"/>
<polyline points="655.85,394.4 663.85,395.3 671.85,397.9 679.85,408.6 687.85,424.6 695.85,440.2 703.85,449.3 711.85,452.6" stroke="#FF0000"/>
<polyline points="711.85,452.6 719.85,448.3 727.85,441.8 735.85,432.1 743.85,423.3 751.85,419.4 759.85,415.1 767.85,407.3 775.85,395.5 783.85,385.0 791.85,372.9 799.85,353.0 807.85,329.3 815.85,302.7 823.85,279.6 831.85,257.9 839.85,236.4 847.85,218.6 855.85,208.2 863.85,207.2" stroke="#008000"/>
<polyline points="863.85,207.2 871.85,214.3 879.85,223.0 887.85,227.0" stroke="#FF0000"/>
<polyline points="887.85,227.0 895.85,225.1 903.85,222.9 911.85,216.6 919.85,205.6 927.85,192.9 935.85,178.2 943.85,159.2 951.85,140.2 959.85,122.4 967.85,106.5 975.85,101.2" stroke="#008000"/>
<polyline points="975.85,101.2 983.85,105.5 991.85,116.8 999.85,136.4 1007.85,161.9 1015.85,193.4 1023.85,224.6 1031.85,250.7 1039.85,272.1 1047.85,285.1 1055.85,299.1 1063.85,317.1 1071.85,341.1 1079.85,365.4 1087.85,380.3" stroke="#FF0000"/>
<polyline points="1087.85,380.3 1095.85,375.8 1103.85,363.2 1111.85,351.8 1119.85,337.3 1127.85,322.0 1135.85,300.0" stroke="#008000"/>
</g>
<polyline points="7.85,657.5 15.85,646.4 23.85,630.4 31.85,625.1 39.85,601.4 47.85,608.8 55.85,584.2 63.85,577.5 71.85,568.2 79.85,577.7 87.85,577.7 95.85,624.5 103.85,645.6 111.85,645.6 119.85,616.1 127.85,674.3 135.85,691.6 143.85,658.9 151.85,667.3 159.85,685.7 167.85,671.7 175.85,664.4 183.85,649.7 191.85,670.9 199.85,622.3 207.85,613.1 215.85,592.8 223.85,574.5 231.85,552.9 239.85,566.1 247.85,562.0 255.85,577.0 263.85,610.4 271.85,622.4 279.85,628.6 287.85,587.7 295.85,587.7 303.85,558.5 311.85,556.8 319.85,601.8 327.85,580.3 335.85,610.9 343.85,610.9 351.85,650.3 359.85,637.4 367.85,649.8 375.85,654.0 383.85,658.5 391.85,617.2 399.85,633.2 407.85,628.1 415.85,658.6 423.85,667.2 431.85,689.1 439.85,668.6 447.85,668.6 455.85,694.9 463.85,687.0 471.85,657.3 479.85,633.0 487.85,604.9 495.85,604.9 503.85,647.3 511.85,626.4 519.85,612.5 527.85,649.6 535.85,654.2 543.85,678.4 551.85,700.9 559.85,681.8 567.85,690.7 575.85,683.6 583.85,651.0 591.85,664.4 599.85,672.9 607.85,635.8 615.85,612.6 623.85,624.5 631.85,624.5 639.85,654.4 647.85,654.4 655.85,660.5 663.85,660.5 671.85,667.9 679.85,712.7 687.85,712.7 695.85,672.4 703.85,629.9 711.85,636.5 719.85,608.1 727.85,629.2 735.85,608.1 743.85,634.7 751.85,660.9 759.85,632.0 767.85,605.8 775.85,594.9 783.85,619.8 791.85,596.7 799.85,567.3 807.85,573.4 815.85,566.8 823.85,592.9 831.85,576.6 839.85,567.5 847.85,581.3 855.85,612.5 863.85,633.6 871.85,638.7 879.85,614.5 887.85,592.3 895.85,583.0 903.85,614.7 911.85,588.1 919.85,577.8 927.85,590.6 935.85,584.4 943.85,566.1 951.85,573.5 959.85,570.7 967.85,564.9 975.85,638.5 983.85,652.0 991.85,652.0 999.85,680.9 1007.85,693.4 1015.85,706.5 1023.85,684.9 1031.85,671.1 1039.85,679.2 1047.85,651.1 1055.85,693.8 1063.85,707.0 1071.85,719.0 1079.85,706.2 1087.85,657.8 1095.85,606.9 1103.85,630.5 1111.85,650.6 1119.85,624.5 1127.85,624.5 1135.85,605.4" fill="none" stroke="#0E6E30" stroke-width="1.15"/>
<polyline points="7.85,820.7 15.85,832.2 23.85,820.1 31.85,818.3 39.85,805.1 47.85,791.4 55.85,780.4 63.85,770.3 71.85,763.5 79.85,775.4 87.85,784.4 95.85,804.2 103.85,818.5 111.85,825.3 119.85,813.0 127.85,844.5 135.85,871.0 143.85,866.7 151.85,857.7 159.85,866.8 167.85,859.3 175.85,850.6 183.85,835.8 191.85,847.1 199.85,822.5 207.85,802.9 215.85,779.1 223.85,762.5 231.85,742.2 239.85,761.1 247.85,774.2 255.85,784.0 263.85,796.2 271.85,803.1 279.85,810.8 287.85,798.9 295.85,792.1 303.85,774.2 311.85,767.2 319.85,781.8 327.85,779.7 335.85,788.9 343.85,801.9 351.85,823.5 359.85,827.6 367.85,826.0 375.85,840.9 383.85,847.8 391.85,829.8 399.85,832.2 407.85,826.7 415.85,847.0 423.85,863.1 431.85,878.1 439.85,869.4 447.85,859.8 455.85,868.7 463.85,868.1 471.85,846.2 479.85,827.1 487.85,803.4 495.85,800.7 503.85,818.2 511.85,810.3 519.85,787.1 527.85,809.4 535.85,826.5 543.85,847.0 551.85,877.8 559.85,868.8 567.85,860.8 575.85,864.1 583.85,843.8 591.85,843.2 599.85,846.1 607.85,829.8 615.85,812.1 623.85,804.5 631.85,809.5 639.85,816.2 647.85,818.1 655.85,831.7 663.85,827.5 671.85,838.9 679.85,879.0 687.85,894.4 695.85,857.4 703.85,831.1 711.85,826.5 719.85,812.0 727.85,810.8 735.85,796.7 743.85,798.4 751.85,831.4 759.85,813.7 767.85,780.9 775.85,767.0 783.85,786.2 791.85,778.5 799.85,738.2 807.85,755.0 815.85,765.6 823.85,782.6 831.85,783.7 839.85,783.7 847.85,788.9 855.85,798.9 863.85,811.2 871.85,820.5 879.85,819.7 887.85,792.5 895.85,777.7 903.85,792.3 911.85,780.4 919.85,760.8 927.85,766.2 935.85,778.2 943.85,771.3 951.85,773.5 959.85,780.7 967.85,783.2 975.85,805.6 983.85,827.8 991.85,843.4 999.85,849.3 1007.85,868.1 1015.85,870.4 1023.85,868.3 1031.85,857.9 1039.85,848.7 1047.85,840.3 1055.85,853.3 1063.85,865.6 1071.85,877.0 1079.85,876.0 1087.85,851.9 1095.85,809.6 1103.85,804.1 1111.85,826.8 1119.85,811.4 1127.85,799.3 1135.85,787.5" fill="none" stroke="#14148A" stroke-width="1.15"/>
<rect x="342" y="854" width="100" height="21" fill="#346FCD" fill-opacity="0.86"/>
<text x="362.3" y="869" style="font-family:Liberation Sans,sans-serif;font-size:14px" fill="#fff" textLength="33.5" lengthAdjust="spacingAndGlyphs">Paste</text>
<g class="lbl">
<text x="1203" y="542" textLength="27.00" lengthAdjust="spacingAndGlyphs">3695</text>
<text x="1203" y="511" textLength="27.00" lengthAdjust="spacingAndGlyphs">3700</text>
<text x="1203" y="479" textLength="27.00" lengthAdjust="spacingAndGlyphs">3705</text>
<text x="1203" y="447" textLength="27.00" lengthAdjust="spacingAndGlyphs">3710</text>
<text x="1203" y="416" textLength="27.00" lengthAdjust="spacingAndGlyphs">3715</text>
<text x="1203" y="384" textLength="27.00" lengthAdjust="spacingAndGlyphs">3720</text>
<text x="1203" y="353" textLength="27.00" lengthAdjust="spacingAndGlyphs">3725</text>
<text x="1203" y="321" textLength="27.00" lengthAdjust="spacingAndGlyphs">3730</text>
<text x="1203" y="290" textLength="27.00" lengthAdjust="spacingAndGlyphs">3735</text>
<text x="1203" y="258" textLength="27.00" lengthAdjust="spacingAndGlyphs">3740</text>
<text x="1203" y="227" textLength="27.00" lengthAdjust="spacingAndGlyphs">3745</text>
<text x="1203" y="195" textLength="27.00" lengthAdjust="spacingAndGlyphs">3750</text>
<text x="1203" y="163" textLength="27.00" lengthAdjust="spacingAndGlyphs">3755</text>
<text x="1203" y="132" textLength="27.00" lengthAdjust="spacingAndGlyphs">3760</text>
<text x="1203" y="100" textLength="27.00" lengthAdjust="spacingAndGlyphs">3765</text>
<text x="1203" y="69" textLength="27.00" lengthAdjust="spacingAndGlyphs">3770</text>
<text x="1203" y="722" textLength="13.50" lengthAdjust="spacingAndGlyphs">20</text>
<text x="1203" y="696" textLength="13.50" lengthAdjust="spacingAndGlyphs">30</text>
<text x="1203" y="669" textLength="13.50" lengthAdjust="spacingAndGlyphs">40</text>
<text x="1203" y="642" textLength="13.50" lengthAdjust="spacingAndGlyphs">50</text>
<text x="1203" y="616" textLength="13.50" lengthAdjust="spacingAndGlyphs">60</text>
<text x="1203" y="589" textLength="13.50" lengthAdjust="spacingAndGlyphs">70</text>
<text x="1203" y="563" textLength="13.50" lengthAdjust="spacingAndGlyphs">80</text>
<text x="1203" y="760" textLength="20.25" lengthAdjust="spacingAndGlyphs">200</text>
<text x="1203" y="793" textLength="20.25" lengthAdjust="spacingAndGlyphs">100</text>
<text x="1203" y="826" textLength="6.75" lengthAdjust="spacingAndGlyphs">0</text>
<text x="1203" y="860" textLength="24.29" lengthAdjust="spacingAndGlyphs">-100</text>
<text x="1203" y="893" textLength="24.29" lengthAdjust="spacingAndGlyphs">-200</text>
<text x="6.5" y="918" text-anchor="middle" textLength="30.9" lengthAdjust="spacingAndGlyphs">15:22</text>
<text x="70.5" y="918" text-anchor="middle" textLength="30.9" lengthAdjust="spacingAndGlyphs">15:36</text>
<text x="134.5" y="918" text-anchor="middle" textLength="30.9" lengthAdjust="spacingAndGlyphs">15:48</text>
<text x="198.5" y="918" text-anchor="middle" textLength="30.9" lengthAdjust="spacingAndGlyphs">16:01</text>
<text x="262.5" y="918" text-anchor="middle" textLength="30.9" lengthAdjust="spacingAndGlyphs">16:10</text>
<text x="326.5" y="918" text-anchor="middle" textLength="30.9" lengthAdjust="spacingAndGlyphs">16:20</text>
<text x="390.5" y="918" text-anchor="middle" textLength="30.9" lengthAdjust="spacingAndGlyphs">16:32</text>
<text x="454.5" y="918" text-anchor="middle" textLength="30.9" lengthAdjust="spacingAndGlyphs">16:46</text>
<text x="518.5" y="918" text-anchor="middle" textLength="30.9" lengthAdjust="spacingAndGlyphs">17:01</text>
<text x="582.5" y="918" text-anchor="middle" textLength="30.9" lengthAdjust="spacingAndGlyphs">17:16</text>
<text x="646.5" y="918" text-anchor="middle" textLength="30.9" lengthAdjust="spacingAndGlyphs">17:30</text>
<text x="710.5" y="918" text-anchor="middle" textLength="30.9" lengthAdjust="spacingAndGlyphs">17:46</text>
<text x="774.5" y="918" text-anchor="middle" textLength="30.9" lengthAdjust="spacingAndGlyphs">18:21</text>
<text x="838.5" y="918" text-anchor="middle" textLength="30.9" lengthAdjust="spacingAndGlyphs">18:54</text>
<text x="902.5" y="918" text-anchor="middle" textLength="30.9" lengthAdjust="spacingAndGlyphs">19:35</text>
<text x="966.5" y="918" text-anchor="middle" textLength="30.9" lengthAdjust="spacingAndGlyphs">20:10</text>
<text x="1030.5" y="918" text-anchor="middle" textLength="30.9" lengthAdjust="spacingAndGlyphs">20:48</text>
<text x="1094.5" y="918" text-anchor="middle" textLength="30.9" lengthAdjust="spacingAndGlyphs">21:38</text>
<text x="-3.9" y="69" textLength="112" lengthAdjust="spacingAndGlyphs">HMA_2C(Close,21)</text>
<text x="-3.9" y="566" textLength="85.1" lengthAdjust="spacingAndGlyphs">RSI(Close,7,1)</text>
<text x="-3" y="752" textLength="44" lengthAdjust="spacingAndGlyphs">CCI(14)</text>
<text x="-2.4" y="536" textLength="141.1" lengthAdjust="spacingAndGlyphs">© 2008 NinjaTrader, LLC</text>
<text x="168.3" y="858" textLength="78.9" lengthAdjust="spacingAndGlyphs">CCI HARKEN</text>
<text x="712.5" y="842" textLength="78.9" lengthAdjust="spacingAndGlyphs">CCI HARKEN</text>
</g>
<polygon points="1196,227 1204.5,218.5 1237.5,218.5 1237.5,234.5 1204.5,234.5" fill="#000" stroke="#000" stroke-width="1"/>
<text x="1206" y="231" style="font-family:Liberation Sans,sans-serif;font-size:14px" fill="#fff" textLength="26.4" lengthAdjust="spacingAndGlyphs">3744</text>
<polygon points="1196,300 1204.5,291.5 1237.5,291.5 1237.5,307.5 1204.5,307.5" fill="#008000" stroke="#000" stroke-width="1"/>
<text x="1206" y="304" style="font-family:Liberation Sans,sans-serif;font-size:14px" fill="#fff" textLength="26.4" lengthAdjust="spacingAndGlyphs">3732</text>
<polygon points="1196,605 1204.5,596.5 1241.5,596.5 1241.5,612.5 1204.5,612.5" fill="#0000CD" stroke="#000" stroke-width="1"/>
<text x="1206" y="609" style="font-family:Liberation Sans,sans-serif;font-size:14px" fill="#fff" textLength="31.2" lengthAdjust="spacingAndGlyphs">61,88</text>
<polygon points="1196,787 1204.5,778.5 1249.5,778.5 1249.5,794.5 1204.5,794.5" fill="#000080" stroke="#000" stroke-width="1"/>
<text x="1206.1" y="791" style="font-family:Liberation Sans,sans-serif;font-size:14px" fill="#fff" textLength="37.7" lengthAdjust="spacingAndGlyphs">100,43</text>
</svg>
</body></html>
